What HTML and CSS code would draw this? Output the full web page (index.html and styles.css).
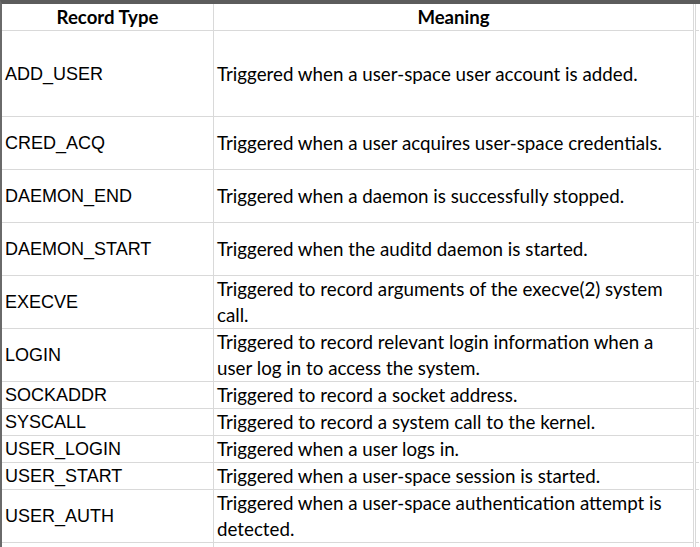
FILE: index.html
```html
<!DOCTYPE html>
<html>
<head>
<meta charset="utf-8">
<link rel="stylesheet" href="styles.css">
</head>
<body>
<div class="sheet">
  <div class="cell head">Record Type</div>
  <div class="cell head">Meaning</div>
  <div class="cell edge"></div>

  <div class="cell type tall">ADD_USER</div>
  <div class="cell desc tall">Triggered when a user-space user account is added.</div>
  <div class="cell edge"></div>

  <div class="cell type">CRED_ACQ</div>
  <div class="cell desc double">Triggered when a user acquires user-space credentials.</div>
  <div class="cell edge"></div>

  <div class="cell type">DAEMON_END</div>
  <div class="cell desc double">Triggered when a daemon is successfully stopped.</div>
  <div class="cell edge"></div>

  <div class="cell type">DAEMON_START</div>
  <div class="cell desc double">Triggered when the auditd daemon is started.</div>
  <div class="cell edge"></div>

  <div class="cell type">EXECVE</div>
  <div class="cell desc double">Triggered to record arguments of the execve(2) system call.</div>
  <div class="cell edge"></div>

  <div class="cell type">LOGIN</div>
  <div class="cell desc double">Triggered to record relevant login information when a user log in to access the system.</div>
  <div class="cell edge"></div>

  <div class="cell type">SOCKADDR</div>
  <div class="cell desc">Triggered to record a socket address.</div>
  <div class="cell edge"></div>

  <div class="cell type">SYSCALL</div>
  <div class="cell desc">Triggered to record a system call to the kernel.</div>
  <div class="cell edge"></div>

  <div class="cell type">USER_LOGIN</div>
  <div class="cell desc">Triggered when a user logs in.</div>
  <div class="cell edge"></div>

  <div class="cell type">USER_START</div>
  <div class="cell desc">Triggered when a user-space session is started.</div>
  <div class="cell edge"></div>

  <div class="cell type">USER_AUTH</div>
  <div class="cell desc double">Triggered when a user-space authentication attempt is detected.</div>
  <div class="cell edge"></div>

  <div class="cell stub"></div>
  <div class="cell stub"></div>
  <div class="cell edge stub"></div>
</div>
</body>
</html>
```

FILE: styles.css
```css
html, body {
  margin: 0;
  padding: 0;
  background: #ffffff;
}

body {
  width: 700px;
  height: 547px;
  overflow: hidden;
}

.sheet {
  display: grid;
  grid-template-columns: 212px 480px 5px;
  border-top: 4px solid #5c5c5c;
  border-left: 2px solid #6a6a6a;
  width: 698px;
}

.cell {
  border-right: 1px solid #d9d9d9;
  border-bottom: 1px solid #d9d9d9;
  display: flex;
  align-items: center;
  min-height: 26px;
  color: #000;
  box-sizing: border-box;
}

.head {
  justify-content: center;
  font-family: "Lato", "Open Sans", sans-serif;
  font-weight: 700;
  font-size: 18.6px;
  height: 27px;
}

.type {
  font-family: "Liberation Sans", Arial, sans-serif;
  font-size: 18px;
  padding-left: 3px;
  padding-top: 1px;
}

.desc {
  font-family: "Lato", "Open Sans", sans-serif;
  font-size: 18.75px;
  line-height: 26px;
  padding-left: 3px;
  padding-right: 4px;
}

.double {
  height: 53px;
}

.tall {
  height: 86px;
}

.edge {
  margin-left: 1px;
  border-left: 1px solid #d9d9d9;
  border-right: none;
}

.stub {
  min-height: 6px;
  height: 6px;
  border-bottom: none;
}
```
